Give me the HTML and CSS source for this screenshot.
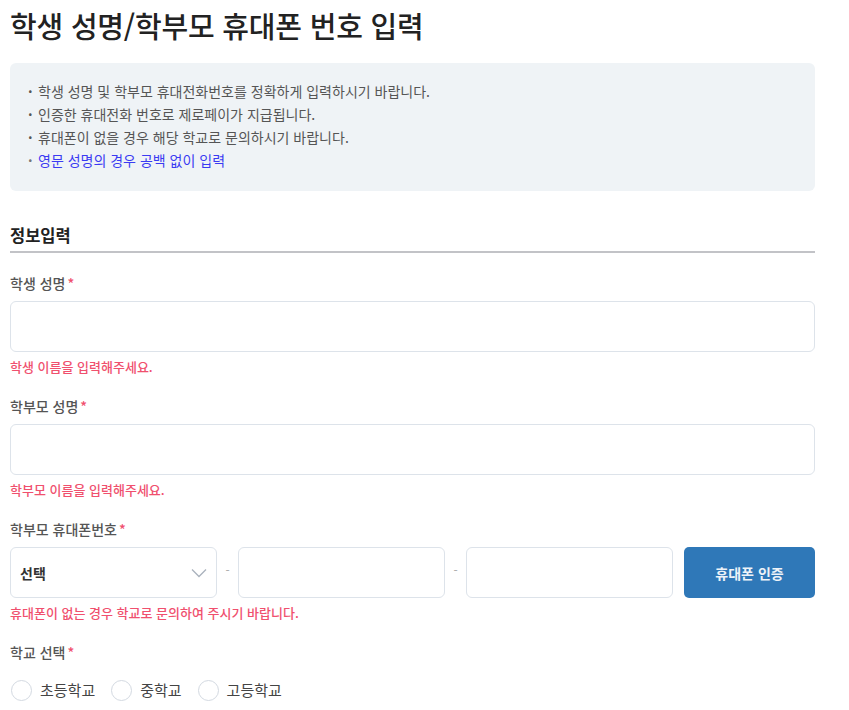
FILE: index.html
```html
<!DOCTYPE html>
<html lang="ko">
<head>
<meta charset="utf-8">
<title>학생 성명/학부모 휴대폰 번호 입력</title>
<link rel="stylesheet" href="styles.css">
</head>
<body>
<div class="page">
  <h1 class="title">학생 성명/학부모 휴대폰 번호 입력</h1>

  <ul class="notice">
    <li>학생 성명 및 학부모 휴대전화번호를 정확하게 입력하시기 바랍니다.</li>
    <li>인증한 휴대전화 번호로 제로페이가 지급됩니다.</li>
    <li>휴대폰이 없을 경우 해당 학교로 문의하시기 바랍니다.</li>
    <li class="blue">영문 성명의 경우 공백 없이 입력</li>
  </ul>

  <h2 class="section">정보입력</h2>

  <div class="field">
    <div class="label">학생 성명<span class="req">*</span></div>
    <div class="input"></div>
    <div class="error">학생 이름을 입력해주세요.</div>
  </div>

  <div class="field">
    <div class="label">학부모 성명<span class="req">*</span></div>
    <div class="input"></div>
    <div class="error">학부모 이름을 입력해주세요.</div>
  </div>

  <div class="field">
    <div class="label">학부모 휴대폰번호<span class="req">*</span></div>
    <div class="phone-row">
      <div class="input select">
        <span>선택</span>
        <svg class="chev" width="16" height="10" viewBox="0 0 16 10"><path d="M1 1.5 L8 8.5 L15 1.5" fill="none" stroke="#aab2bd" stroke-width="1.3"/></svg>
      </div>
      <span class="dash">-</span>
      <div class="input"></div>
      <span class="dash">-</span>
      <div class="input"></div>
      <button class="btn">휴대폰 인증</button>
    </div>
    <div class="error">휴대폰이 없는 경우 학교로 문의하여 주시기 바랍니다.</div>
  </div>

  <div class="field">
    <div class="label">학교 선택<span class="req">*</span></div>
    <div class="radios">
      <label class="radio"><span class="circle"></span>초등학교</label>
      <label class="radio"><span class="circle"></span>중학교</label>
      <label class="radio"><span class="circle"></span>고등학교</label>
    </div>
  </div>
</div>
</body>
</html>
```

FILE: styles.css
```css
* { box-sizing: border-box; }
body {
  margin: 0;
  background: #fff;
  font-family: "Noto Sans CJK KR", "Noto Sans", sans-serif;
  color: #333;
}
.page {
  width: 815px;
  padding: 6px 0 0 10px;
}
.title {
  margin: 0;
  font-size: 29px;
  font-weight: 500;
  line-height: 38px;
  color: #222;
  letter-spacing: -0.2px;
}
.notice {
  list-style: none;
  margin: 19px 0 0;
  padding: 17px 18px 19px 18px;
  background: #eff3f6;
  border-radius: 6px;
}
.notice li {
  font-size: 14px;
  line-height: 23px;
  color: #555;
}
.notice li::before {
  content: "·";
  display: inline-block;
  width: 10px;
  font-weight: 700;
}
.notice li.blue { color: #3b3bf2; }
.notice li.blue::before { color: #777; }
.section {
  margin: 33px 0 0;
  padding-bottom: 5px;
  font-size: 16.5px;
  font-weight: 700;
  line-height: 22px;
  color: #222;
  border-bottom: 2px solid #c2c3c7;
}
.field { margin-top: 20px; }
.label {
  font-size: 14px;
  line-height: 20px;
  color: #555;
  font-weight: 500;
}
.req { color: #f0506e; margin-left: 2px; }
.input {
  margin-top: 8px;
  height: 51px;
  border: 1px solid #dde3ea;
  border-radius: 6px;
  background: #fff;
}
.error {
  margin-top: 6px;
  font-size: 13px;
  line-height: 18px;
  color: #f0506e;
  font-weight: 500;
}
.phone-row {
  display: grid;
  grid-template-columns: 1fr 21px 1fr 21px 1fr 142px;
  margin-top: 8px;
}
.phone-row .input {
  min-width: 0;
  margin-top: 0;
}
.select {
  display: flex;
  align-items: center;
  justify-content: space-between;
  padding: 0 9px;
  font-size: 14px;
  font-weight: 700;
  color: #333;
}
.dash {
  text-align: center;
  font-size: 12px;
  line-height: 51px;
  color: #aaa;
  margin-top: -3px;
}
.btn {
  margin-left: 11px;
  height: 51px;
  border: none;
  border-radius: 5px;
  background: #2f78b8;
  color: #eef3f8;
  font-family: inherit;
  font-size: 14px;
  font-weight: 700;
}
.radios {
  display: flex;
  gap: 15px;
  margin-top: 17px;
}
.radio {
  display: flex;
  align-items: center;
  font-size: 15px;
  color: #444;
  line-height: 22px;
}
.circle {
  width: 21px;
  height: 21px;
  border: 1.5px solid #d3d9e1;
  border-radius: 50%;
  margin: 0 8px 0 1px;
}
```
